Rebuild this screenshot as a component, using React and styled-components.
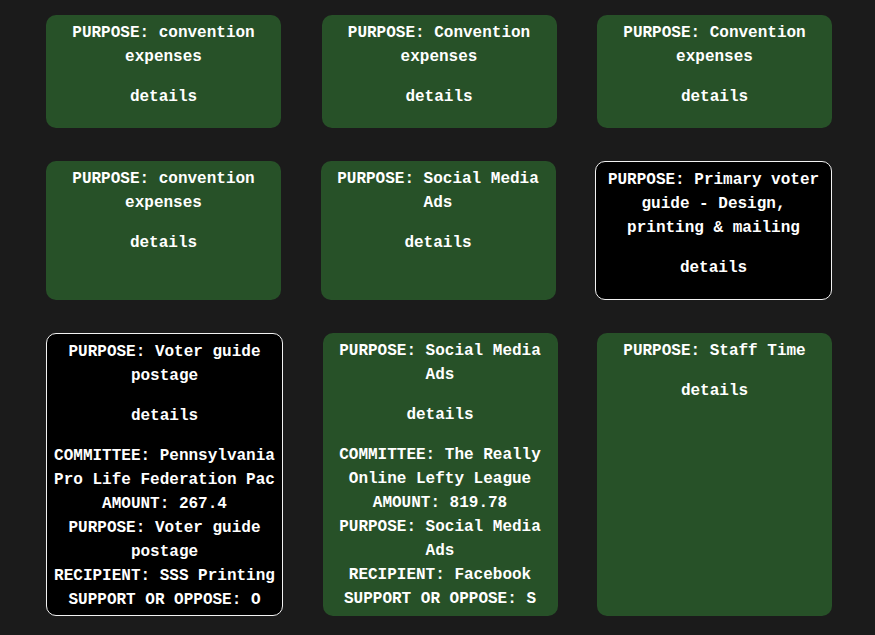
import React from "react";
import styled, { createGlobalStyle } from "styled-components";

const expenses = [
  { purpose: "convention expenses" },
  { purpose: "Convention expenses" },
  { purpose: "Convention expenses" },
  { purpose: "convention expenses" },
  { purpose: "Social Media Ads" },
  { purpose: "Primary voter guide - Design, printing & mailing", dark: true },
  {
    purpose: "Voter guide postage",
    dark: true,
    open: true,
    committee: "Pennsylvania Pro Life Federation Pac",
    amount: "267.4",
    recipient: "SSS Printing",
    support: "O",
  },
  {
    purpose: "Social Media Ads",
    open: true,
    committee: "The Really Online Lefty League",
    amount: "819.78",
    recipient: "Facebook",
    support: "S",
  },
  { purpose: "Staff Time" },
];

const GlobalStyle = createGlobalStyle`
  html, body {
    margin: 0;
    background-color: #1b1b1b;
  }
  body {
    font-family: "Liberation Mono", "Courier New", monospace;
  }
`;

function App() {
  return (
    <>
      <GlobalStyle />
      <StyledGrid>
        {expenses.map((item, i) => (
          <Card key={i} $dark={item.dark}>
            <Purpose>PURPOSE: {item.purpose}</Purpose>
            <Details>details</Details>
            {item.open && (
              <DetailList>
                <div>COMMITTEE: {item.committee}</div>
                <div>AMOUNT: {item.amount}</div>
                <div>PURPOSE: {item.purpose}</div>
                <div>RECIPIENT: {item.recipient}</div>
                <div>SUPPORT OR OPPOSE: {item.support}</div>
              </DetailList>
            )}
          </Card>
        ))}
      </StyledGrid>
    </>
  );
}

export default App;

const StyledGrid = styled.div`
  display: flex;
  flex-wrap: wrap;
  justify-content: space-between;
  align-content: flex-start;
  row-gap: 33px;
  padding: 15px 43px 18px 46px;
  min-height: 100vh;
  box-sizing: border-box;
`;

const Card = styled.div`
  width: 225px;
  padding: 6px 5px 3px;
  border-radius: 10px;
  background-color: ${(p) => (p.$dark ? "#000" : "#275128")};
  border: ${(p) => (p.$dark ? "1px solid #f2f2f2" : "none")};
  color: #fff;
  font-family: "Liberation Mono", "Courier New", monospace;
  font-weight: bold;
  font-size: 16px;
  line-height: 24px;
  text-align: center;
`;

const Purpose = styled.div``;

const Details = styled.p`
  margin: 16px 0;
  cursor: pointer;
`;

const DetailList = styled.div`
  display: flex;
  flex-direction: column;
`;
